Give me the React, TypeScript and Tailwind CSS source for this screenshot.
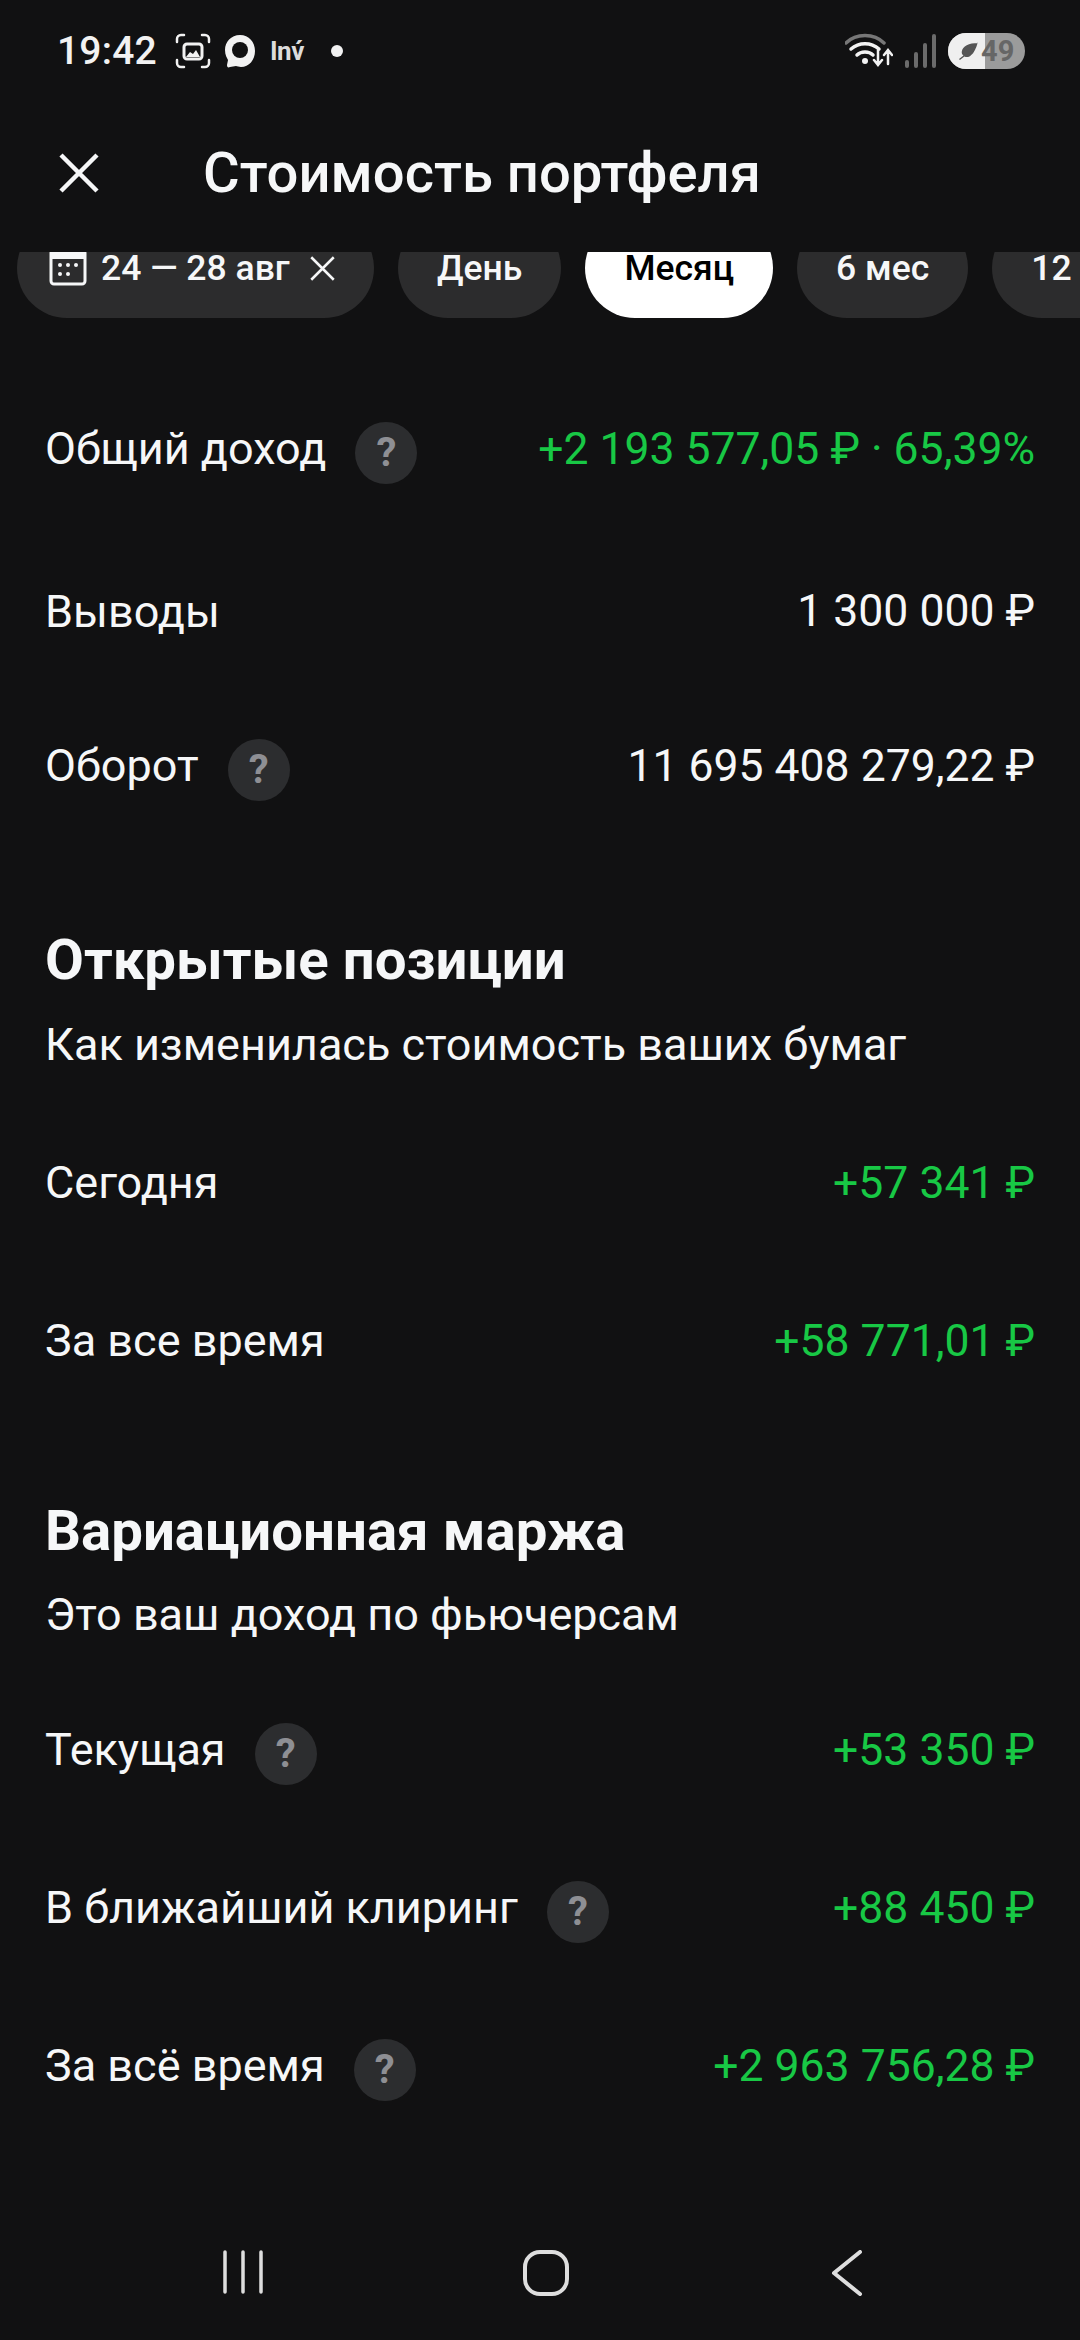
const GREEN = "text-[#18c845]";

const HelpDot = () => (
  <span className="ml-[29px] mt-[8px] flex h-[62px] w-[62px] items-center justify-center rounded-full bg-[#2c2d2f] text-[40px] font-bold text-[#8e8f94]">
    ?
  </span>
);

interface RowProps {
  label: string;
  value: string;
  help?: boolean;
  green?: boolean;
  className?: string;
}

const Row = ({ label, value, help, green, className }: RowProps) => (
  <div className={`flex h-[158px] items-center justify-between ${className ?? ""}`}>
    <div className="flex items-center">
      <span>{label}</span>
      {help && <HelpDot />}
    </div>
    <span className={`text-[44.5px] ${green ? GREEN : "text-[#f6f7f8]"}`}>{value}</span>
  </div>
);

const CloseIcon = ({ size, width, className }: { size: number; width: number; className?: string }) => (
  <svg className={className} width={size} height={size} viewBox="0 0 40 40" fill="none" stroke="currentColor" strokeWidth={width}>
    <path d="M2 2l36 36M38 2L2 38" />
  </svg>
);

const StatusBar = () => (
  <div className="flex h-[100px] items-center justify-between pl-[57px] pr-[55px] pt-[2px] text-[#f2f2f2]">
    <div className="flex items-center">
      <span className="text-[39px] font-medium tracking-[0.2px]">19:42</span>
      <svg className="ml-[18px]" width="36" height="36" viewBox="0 0 36 36" fill="none">
        <path
          d="M2 9V6a4 4 0 0 1 4-4h3M27 2h3a4 4 0 0 1 4 4v3M34 27v3a4 4 0 0 1-4 4h-3M9 34H6a4 4 0 0 1-4-4v-3"
          stroke="currentColor"
          strokeWidth="2.5"
          strokeLinecap="round"
        />
        <rect x="9" y="11" width="18" height="15" rx="3" stroke="currentColor" strokeWidth="3" />
        <path d="M11 24l4-5 3 2 3-4 4 7z" fill="currentColor" />
      </svg>
      <svg className="ml-[13px]" width="32" height="34" viewBox="0 0 32 34" fill="none">
        <path
          d="M16 1C7 1 1 8 1 16c0 5 2 8 3 10l-1 5c0 2 1 3 3 2l6-1c1 0 3 1 5 1 8 0 14-7 14-16C31 8 25 1 16 1z"
          fill="currentColor"
        />
        <circle cx="16" cy="16" r="8" fill="#111112" />
      </svg>
      <span className="ml-[14px] text-[26px] font-bold tracking-[-0.5px] text-[#dcdcdc]">Inv́</span>
      <span className="ml-[27px] h-[12px] w-[12px] rounded-full bg-[#f2f2f2]" />
    </div>
    <div className="flex items-center">
      <svg width="48" height="36" viewBox="0 0 48 36" fill="none" strokeLinecap="round">
        <path d="M1 10C11 0 29 0 39 10" stroke="#777" strokeWidth="3.5" />
        <path d="M6 16c8-7 20-7 28 0M12 22c4-4 12-4 16 0" stroke="#f2f2f2" strokeWidth="3.5" />
        <circle cx="20" cy="28" r="3" fill="#f2f2f2" />
        <path d="M33 17v14M29 27l4 5 4-5M43 31V19M39 22l4-5 4 5" stroke="#f2f2f2" strokeWidth="2.5" />
      </svg>
      <svg className="ml-[12px]" width="32" height="34" viewBox="0 0 32 34" fill="#6b6b6b">
        <rect x="0" y="26" width="4" height="8" rx="2" />
        <rect x="9" y="18" width="4" height="16" rx="2" />
        <rect x="18" y="9" width="4" height="25" rx="2" />
        <rect x="27" y="0" width="4" height="34" rx="2" />
      </svg>
      <div className="relative ml-[11px] flex h-[36px] w-[77px] items-center overflow-hidden rounded-full bg-[#9b9b9b]">
        <div className="absolute inset-y-0 left-0 w-[37px] bg-[#efefef]" />
        <svg className="relative ml-[9px]" width="22" height="18" viewBox="0 0 24 20" fill="#555">
          <path d="M23 1C13 1 6 4 5 11c0 2 1 3 2 4l-5 4 1 1 5-4c2 1 5 1 7-1 4-3 6-8 8-15z" />
        </svg>
        <span className="relative ml-[2px] text-[29px] font-bold leading-none text-[#666]">49</span>
      </div>
    </div>
  </div>
);

const Chip = ({ children, active }: { children: React.ReactNode; active?: boolean }) => (
  <div
    className={`flex h-[100px] shrink-0 items-center justify-center rounded-full px-[39px] text-[35.5px] font-medium leading-[30px] ${
      active ? "bg-white text-black" : "bg-[#2c2c2d] text-[#f6f7f8]"
    }`}
  >
    {children}
  </div>
);

const NavBar = () => (
  <div className="flex h-[120px] items-start pt-[30px] text-[#dedede]">
    <svg className="ml-[223px]" width="40" height="44" viewBox="0 0 40 44" stroke="currentColor" strokeWidth="3.5" strokeLinecap="round">
      <path d="M2 2v40M20 2v40M38 2v40" />
    </svg>
    <svg className="ml-[260px]" width="46" height="46" viewBox="0 0 46 46" fill="none" stroke="currentColor" strokeWidth="4">
      <rect x="2" y="2" width="42" height="42" rx="15" />
    </svg>
    <svg className="ml-[262px]" width="32" height="46" viewBox="0 0 32 46" fill="none" stroke="currentColor" strokeWidth="4" strokeLinecap="round" strokeLinejoin="round">
      <path d="M29 2L3 23l26 21" />
    </svg>
  </div>
);

export default function App() {
  return (
    <div className="flex h-[2340px] w-[1080px] flex-col overflow-hidden bg-[#111112] font-['Roboto',sans-serif] text-[#f6f7f8]">
      <StatusBar />

      <div className="flex h-[152px] items-center pb-[6px]">
        <CloseIcon className="ml-[59px]" size={40} width={4.5} />
        <h1 className="ml-[104px] text-[56.2px] font-medium">Стоимость портфеля</h1>
      </div>

      <div className="h-[66px] overflow-hidden">
        <div className="-mt-[34px] flex gap-[24px] pl-[17px]">
          <div className="flex h-[100px] w-[357px] shrink-0 items-center rounded-full bg-[#2c2c2d] pl-[32px] text-[35.5px] font-medium leading-[30px]">
            <svg width="38" height="36" viewBox="0 0 38 36" fill="none" className="mr-[14px]">
              <path
                d="M3 2h32a1 1 0 0 1 1 1v28a3 3 0 0 1-3 3H5a3 3 0 0 1-3-3V3a1 1 0 0 1 1-1z"
                stroke="currentColor"
                strokeWidth="3"
              />
              <rect x="2" y="2" width="34" height="7" fill="currentColor" />
              <g fill="currentColor">
                <circle cx="11" cy="15" r="2" />
                <circle cx="19" cy="15" r="2" />
                <circle cx="27" cy="15" r="2" />
                <circle cx="11" cy="24" r="2" />
                <circle cx="19" cy="24" r="2" />
              </g>
            </svg>
            <span>24 — 28 авг</span>
            <CloseIcon className="ml-[20px]" size={25} width={4} />
          </div>
          <Chip>День</Chip>
          <Chip active>Месяц</Chip>
          <Chip>6 мес</Chip>
          <Chip>12 мес</Chip>
        </div>
      </div>

      <div className="flex-1 px-[45px] pt-[52px] text-[45px]">
        <Row label="Общий доход" value="+2 193 577,05 ₽ · 65,39%" help green />
        <Row label="Выводы" value="1 300 000 ₽" className="pt-[9px]" />
        <Row label="Оборот" value="11 695 408 279,22 ₽" help className="pt-[2px]" />

        <h2 className="mt-[85px] text-[56.4px] font-bold leading-[62px]">Открытые позиции</h2>
        <p className="mt-[29px] leading-[50px]">Как изменилась стоимость ваших бумаг</p>
        <div className="mt-[34px]">
          <Row label="Сегодня" value="+57 341 ₽" green />
          <Row label="За все время" value="+58 771,01 ₽" green />
        </div>

        <h2 className="mt-[80px] text-[56.4px] font-bold leading-[62px]">Вариационная маржа</h2>
        <p className="mt-[28px] leading-[50px]">Это ваш доход по фьючерсам</p>
        <div className="mt-[31px]">
          <Row label="Текущая" value="+53 350 ₽" help green />
          <Row label="В ближайший клиринг" value="+88 450 ₽" help green />
          <Row label="За всё время" value="+2 963 756,28 ₽" help green />
        </div>
      </div>

      <NavBar />
    </div>
  );
}
